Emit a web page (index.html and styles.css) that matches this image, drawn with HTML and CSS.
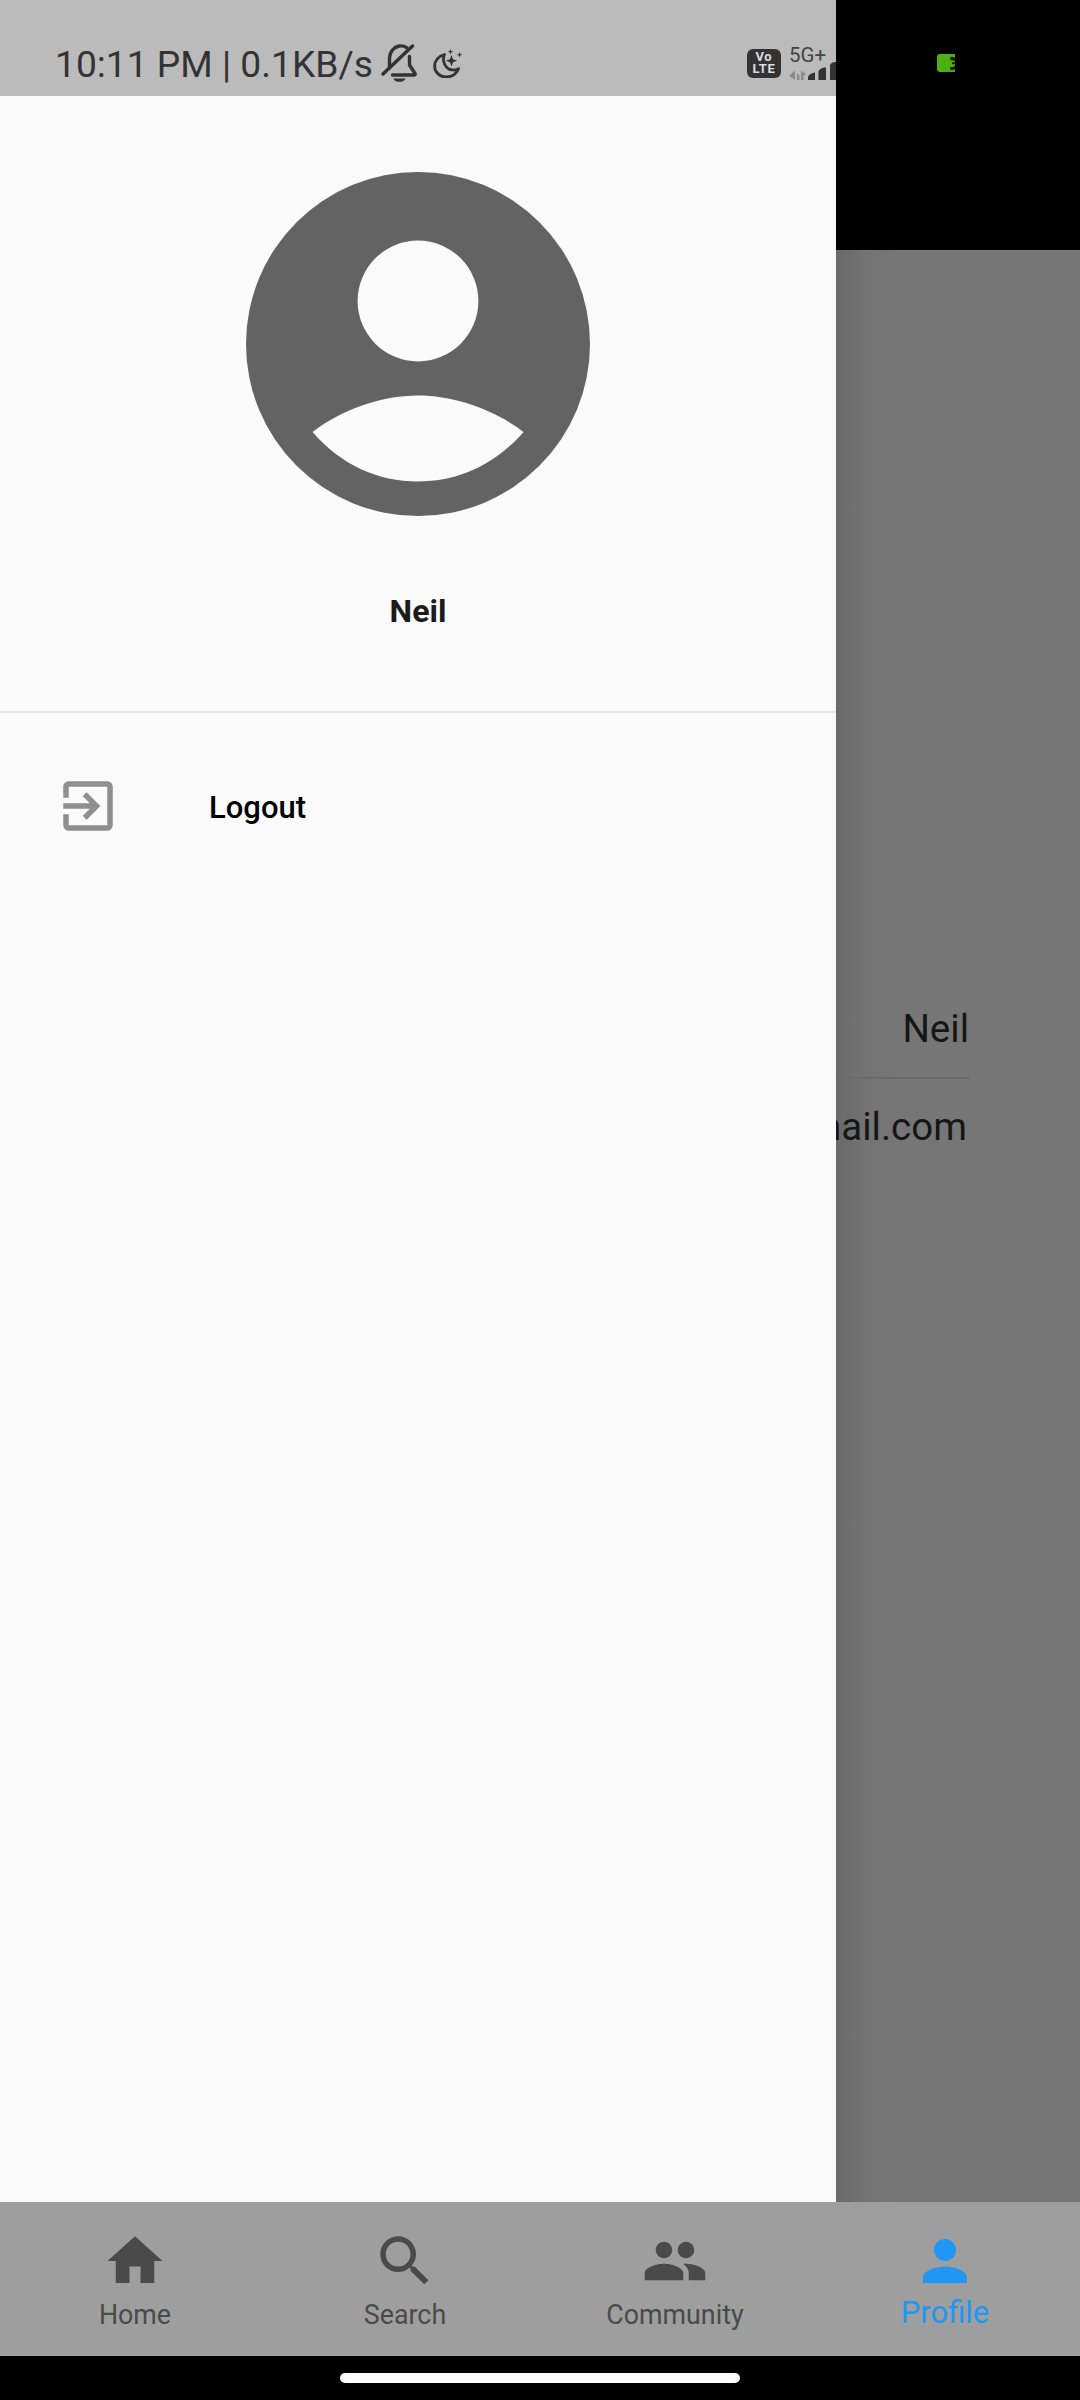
FILE: index.html
```html
<!DOCTYPE html>
<html lang="en">
<head>
<meta charset="utf-8">
<title>Profile</title>
<link rel="stylesheet" href="styles.css">
</head>
<body>
<div class="app">
  <div class="main">
    <aside class="drawer">
      <div class="status">
        <span class="status-text">10:11 PM | 0.1KB/s</span>
        <svg class="bell" viewBox="0 0 36 38" fill="none" stroke="#333" stroke-width="3.4" stroke-linecap="round" stroke-linejoin="round">
          <path d="M8.5 24V14C8.5 8 12.5 3.5 18 2C21 1.6 23.8 2.2 25.6 3.6"/>
          <path d="M28.5 12.5V21L34 29.5C34.4 30.6 34 31 33 31H11.5"/>
          <path d="M2 30L31.5 2"/>
          <path d="M12.5 34.4H24.5C24 36.8 21.4 37.8 18.5 37.8C15.6 37.8 13 36.8 12.5 34.4Z" fill="#333" stroke="none"/>
        </svg>
        <svg class="moon" viewBox="0 0 30 30" fill="none" stroke="#333" stroke-width="2.8" stroke-linecap="round" stroke-linejoin="round">
          <path d="M11.5 6.5C5.5 8 1.6 12.8 1.6 18C1.6 24.4 7 29 13 29C19 29 23.6 25.8 25.6 20.6C22 22.8 16.8 22.4 13.8 19.4C10.4 16 9.6 10.6 11.5 6.5Z"/>
          <path d="M18.5 7L20 11.2L24.2 12.7L20 14.2L18.5 18.4L17 14.2L12.8 12.7L17 11.2Z" fill="#333" stroke="none"/>
          <path d="M17.5 1L18.2 3L20.2 3.7L18.2 4.4L17.5 6.4L16.8 4.4L14.8 3.7L16.8 3Z" fill="#333" stroke="none"/>
          <path d="M26.5 4L27.2 6L29.2 6.7L27.2 7.4L26.5 9.4L25.8 7.4L23.8 6.7L25.8 6Z" fill="#333" stroke="none"/>
        </svg>
        <div class="volte"><span>Vo</span><span>LTE</span></div>
        <div class="net">
          <span class="net-label">5G+</span>
          <svg class="net-bars" viewBox="0 0 47 18">
            <path d="M6 8.5V18L0 14Z M8 11V18H10.5V13.5Z M12 8.5V18H14.5V11Z M14.5 8.5L17 13H14.5Z" fill="#8a8a8a"/>
            <path d="M19 15.5C19 13.5 22 11 26 10.5V18H19Z M29.5 10C29.5 7.5 33 5.5 37 5.5V18H29.5Z M41 4C41 2 43 0 47 0V18H41Z" fill="#333"/>
          </svg>
        </div>
      </div>
      <div class="profile-head">
        <svg class="avatar" viewBox="0 0 344 344">
          <circle cx="172" cy="172" r="172" fill="#636363"/>
          <circle cx="172" cy="129" r="60.4" fill="#fafafa"/>
          <path d="M66.5 260C95 238 135 223.5 172 223.5C209 223.5 249 238 277.5 260C249 293 212 309.5 172 309.5C132 309.5 95 293 66.5 260Z" fill="#fafafa"/>
        </svg>
        <div class="profile-name">Neil</div>
      </div>
      <div class="menu-row">
        <svg class="logout-icon" viewBox="0 0 24 24"><path d="M10.09 15.59L11.5 17l5-5-5-5-1.41 1.41L12.67 11H3v2h9.67l-2.58 2.59zM19 3H5c-1.11 0-2 .9-2 2v4h2V5h14v14H5v-4H3v4c0 1.1.89 2 2 2h14c1.1 0 2-.9 2-2V5c0-1.1-.9-2-2-2z"/></svg>
        <span class="menu-label">Logout</span>
      </div>
    </aside>
    <section class="scrim">
      <div class="scrim-top">
        <svg class="battery" viewBox="0 0 18 18">
          <path d="M3 0H18V18H3C1.2 18 0 16.8 0 15V3C0 1.2 1.2 0 3 0Z" fill="#4caf14"/>
          <path d="M13 3.5C15 2.6 17 3 18 4V7.5C17 6.3 15.5 6 13.8 6.5Z M13 13C15 13.5 17 13 18 12V15C17 16 15 16.2 13 15.4Z M15 8.2H18V10.2H15Z" fill="#0c1c04"/>
        </svg>
      </div>
      <div class="scrim-body">
        <div class="field field-name">Neil</div>
        <div class="field-rule"></div>
        <div class="field field-mail">neil@gmail.com</div>
      </div>
    </section>
  </div>
  <nav class="nav">
    <div class="nav-item">
      <svg class="nav-icon" viewBox="0 0 24 24"><path d="M10 20v-6h4v6h5v-8h3L12 3 2 12h3v8z"/></svg>
      <span class="nav-label">Home</span>
    </div>
    <div class="nav-item">
      <svg class="nav-icon" viewBox="0 0 24 24"><path d="M15.5 14h-.79l-.28-.27C15.41 12.59 16 11.11 16 9.5 16 5.91 13.09 3 9.5 3S3 5.91 3 9.5 5.91 16 9.5 16c1.61 0 3.09-.59 4.23-1.57l.27.28v.79l5 4.99L20.49 19l-4.99-5zm-6 0C7.01 14 5 11.99 5 9.5S7.01 5 9.5 5 14 7.01 14 9.5 11.99 14 9.5 14z"/></svg>
      <span class="nav-label">Search</span>
    </div>
    <div class="nav-item">
      <svg class="nav-icon" viewBox="0 0 24 24"><path d="M16 11c1.66 0 2.99-1.34 2.99-3S17.66 5 16 5c-1.66 0-3 1.34-3 3s1.34 3 3 3zm-8 0c1.66 0 2.99-1.34 2.99-3S9.66 5 8 5C6.34 5 5 6.34 5 8s1.34 3 3 3zm0 2c-2.33 0-7 1.17-7 3.5V19h14v-2.5c0-2.33-4.67-3.5-7-3.5zm8 0c-.29 0-.62.02-.97.05 1.16.84 1.97 1.97 1.97 3.45V19h6v-2.5c0-2.33-4.67-3.5-7-3.5z"/></svg>
      <span class="nav-label">Community</span>
    </div>
    <div class="nav-item nav-item-active">
      <svg class="nav-icon" viewBox="0 0 24 24"><path d="M12 12c2.21 0 4-1.79 4-4s-1.79-4-4-4-4 1.79-4 4 1.79 4 4 4zm0 2c-2.67 0-8 1.34-8 4v2h16v-2c0-2.66-5.33-4-8-4z"/></svg>
      <span class="nav-label">Profile</span>
    </div>
  </nav>
  <div class="gesture"><div class="gesture-pill"></div></div>
</div>
</body>
</html>
```
FILE: styles.css
```css
* { box-sizing: border-box; }
html, body { margin: 0; padding: 0; }
body { font-family: Roboto, "Liberation Sans", sans-serif; background: #000; }
.app { width: 1080px; height: 2400px; display: flex; flex-direction: column; overflow: hidden; }
.main { flex: 1; display: flex; min-height: 0; }

.drawer { width: 836px; background: #fafafa; display: flex; flex-direction: column; flex: none; }
.status { height: 96px; background: #bbbbbb; display: flex; align-items: center; padding-left: 55px; overflow: hidden; color: #333; padding-top: 30px; }
.status-text { font-size: 37.2px; line-height: 40px; white-space: nowrap; margin-top: 2px; }
.bell { width: 36px; height: 38px; margin-left: 8px; flex: none; }
.moon { width: 30px; height: 30px; margin-left: 16px; flex: none; }
.volte { width: 34px; height: 29px; margin-left: 284px; background: #333; border-radius: 6px; color: #ddd; font-size: 13px; font-weight: 700; line-height: 12.5px; display: flex; flex-direction: column; align-items: center; justify-content: center; flex: none; letter-spacing: .6px; }
.net { margin-left: 8px; width: 47px; display: flex; flex-direction: column; flex: none; }
.net-label { font-size: 20.5px; line-height: 19px; color: #444; white-space: nowrap; }
.net-bars { width: 47px; height: 18px; margin-top: -3px; display: block; }

.profile-head { height: 617px; border-bottom: 2px solid #e6e6e6; display: flex; flex-direction: column; align-items: center; padding-top: 76px; }
.avatar { width: 344px; height: 344px; display: block; }
.profile-name { margin-top: 76px; font-size: 32px; line-height: 38px; font-weight: 700; color: #1c1c1c; }

.menu-row { display: flex; align-items: center; padding: 60px 0 0 55px; }
.logout-icon { width: 66px; height: 66px; fill: #8f8f8f; flex: none; }
.menu-label { margin-left: 88px; margin-top: 3px; font-size: 31px; line-height: 36px; font-weight: 500; color: #000; }

.scrim { flex: 1; min-width: 0; background: linear-gradient(90deg, #696969 0, #747474 30px, #767676 60px); display: flex; flex-direction: column; }
.scrim-top { height: 250px; background: #000; padding: 54px 0 0 101px; }
.battery { width: 18px; height: 18px; display: block; }
.scrim-body { display: flex; flex-direction: column; padding-top: 758px; overflow: hidden; }
.field { font-size: 38.5px; line-height: 42px; color: #161616; white-space: nowrap; display: flex; justify-content: flex-end; padding-right: 111px; }
.field-rule { height: 2px; width: 134px; background: #6b6b6b; margin-top: 27px; }
.field-mail { margin-top: 27px; padding-right: 113px; }

.nav { height: 154px; background: #9e9e9e; display: grid; grid-template-columns: repeat(4, 1fr); flex: none; padding-top: 26px; }
.nav-item { display: flex; flex-direction: column; align-items: center; color: #4a4a4a; fill: #4a4a4a; }
.nav-icon { width: 66px; height: 66px; display: block; flex: none; }
.nav-label { font-size: 26.8px; line-height: 30px; margin-top: 6px; white-space: nowrap; }
.nav-item-active { color: #2196f3; fill: #2196f3; }
.nav-item-active .nav-label { font-size: 31px; line-height: 34px; margin-top: 2px; }

.gesture { height: 44px; background: #000; flex: none; padding-top: 17px; display: flex; justify-content: center; }
.gesture-pill { width: 400px; height: 10px; border-radius: 5px; background: #fff; }
```
